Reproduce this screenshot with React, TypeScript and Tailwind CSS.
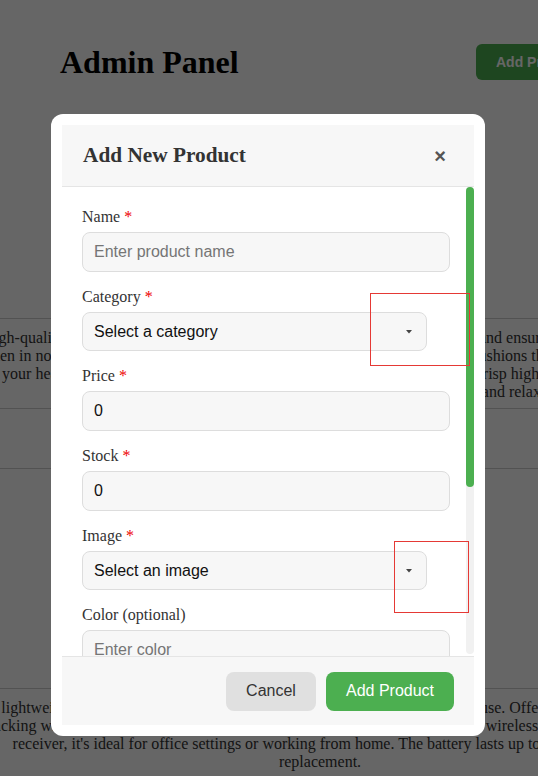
import { ChangeEvent, useState } from 'react'

type Field = {
  name: string
  label: string
  required: boolean
  kind: 'input' | 'select' | 'textarea'
  placeholder?: string
}

const fields: Field[] = [
  { name: 'name', label: 'Name', required: true, kind: 'input', placeholder: 'Enter product name' },
  { name: 'category', label: 'Category', required: true, kind: 'select', placeholder: 'Select a category' },
  { name: 'price', label: 'Price', required: true, kind: 'input' },
  { name: 'stock', label: 'Stock', required: true, kind: 'input' },
  { name: 'image', label: 'Image', required: true, kind: 'select', placeholder: 'Select an image' },
  { name: 'color', label: 'Color (optional)', required: false, kind: 'input', placeholder: 'Enter color' },
  { name: 'description', label: 'Description (optional)', required: false, kind: 'textarea', placeholder: 'Enter description' },
  { name: 'rating', label: 'Rating (optional)', required: false, kind: 'input', placeholder: 'Enter rating' },
]

const initial: Record<string, string> = {
  name: '',
  category: '',
  price: '0',
  stock: '0',
  image: '',
  color: '',
  description: '',
  rating: '',
}

const headphones = [
  'Experience high-quality sound with these wireless headphones, built for all-day comfort and ensuring uninterrupted audio daily.',
  'When you listen in noisy environments, the active noise cancellation and plush soft ear cushions that sit comfortably on the ears',
  'rest gently on your head while the 40mm drivers deliver rich warm mids, deep bass and crisp highs for music, movies and calls.',
  'Up to 30 hours of playback on one charge for travel, work, study and relaxation.',
]

const mouse = [
  'A lightweight ergonomic wireless mouse designed for comfortable everyday use. Offering a smooth and',
  'tracking with adjustable DPI, silent clicks and an easy connection through the wireless nano USB dongle',
  "receiver, it's ideal for office settings or working from home. The battery lasts up to 1 full year of",
  'replacement.',
]

function Caret() {
  return (
    <svg width="6" height="4" viewBox="0 0 6 4" className="pointer-events-none absolute right-[15px] top-1/2 -translate-y-1/2">
      <path d="M0 0h6L3 3.5z" fill="#444" />
    </svg>
  )
}

export default function App() {
  const [form, setForm] = useState(initial)

  const handleChange = (e: ChangeEvent<HTMLInputElement | HTMLSelectElement | HTMLTextAreaElement>) => {
    setForm({ ...form, [e.target.name]: e.target.value })
  }

  return (
    <div className="relative h-[776px] w-full overflow-hidden bg-white font-['Liberation_Serif',serif] text-[#333]">
      {/* page behind the modal */}
      <div className="w-[660px]">
        <div className="flex items-center px-[60px] pt-[44px]">
          <h1 className="text-[32px] leading-[36px] font-bold text-black">Admin Panel</h1>
          <button className="ml-auto h-9 rounded-md bg-[#4caf50] px-5 font-['Liberation_Sans',sans-serif] text-sm font-bold text-white">
            Add Product
          </button>
        </div>

        <div className="mt-[238px] flex w-[640px] flex-col items-center border-y border-[#ccc] pb-[7px] pt-[10px] text-base leading-[18px]">
          {headphones.map((line) => (
            <p key={line} className="whitespace-nowrap">{line}</p>
          ))}
        </div>
        <div className="h-[60px] w-[640px] border-b border-[#ccc]" />

        <div className="mt-[219px] flex w-[640px] flex-col items-center border-t border-[#ccc] pt-[10px] text-base leading-[18px]">
          {mouse.map((line) => (
            <p key={line} className="whitespace-nowrap">{line}</p>
          ))}
        </div>
      </div>

      {/* overlay */}
      <div className="absolute inset-0 bg-black/60 pl-[51px] pt-[114px]">
        <div className="flex h-[622px] w-[434px] flex-col rounded-xl bg-white p-[11px]">
          <div className="flex h-[62px] shrink-0 items-center border-b border-[#e5e5e5] bg-[#f7f7f7] pl-[21px] pr-[28px]">
            <h2 className="text-[21.3px] font-bold text-[#333]">Add New Product</h2>
            <button className="ml-auto font-['Liberation_Sans',sans-serif] text-[20px] font-bold leading-none text-[#555]">×</button>
          </div>

          <div className="flex min-h-0 flex-1">
            <div className="min-w-0 flex-1 overflow-hidden pb-3 pl-5 pr-4 pt-[21px]">
              {fields.map((f) => (
                <div key={f.name} className="mb-4">
                  <label className="mb-1.5 block text-base leading-[18px] text-[#333]">
                    {f.label}
                    {f.required && <span className="text-[#e00]"> *</span>}
                  </label>
                  {f.kind === 'select' ? (
                    <div className="relative w-[345px]">
                      <select
                        name={f.name}
                        value={form[f.name]}
                        onChange={handleChange}
                        className="h-[39px] w-full appearance-none rounded-lg border border-[#ddd] bg-[#f7f7f7] pl-[11px] pr-8 font-['Liberation_Sans',sans-serif] text-base text-[#111] outline-none"
                      >
                        <option value="">{f.placeholder}</option>
                      </select>
                      <Caret />
                    </div>
                  ) : f.kind === 'textarea' ? (
                    <textarea
                      name={f.name}
                      value={form[f.name]}
                      onChange={handleChange}
                      placeholder={f.placeholder}
                      className="block h-[100px] w-full resize-none rounded-lg border border-[#ddd] bg-[#f7f7f7] px-[11px] py-2.5 font-['Liberation_Sans',sans-serif] text-base outline-none placeholder:text-[#757575]"
                    />
                  ) : (
                    <input
                      name={f.name}
                      value={form[f.name]}
                      onChange={handleChange}
                      placeholder={f.placeholder}
                      className="block h-10 w-full rounded-lg border border-[#ddd] bg-[#f7f7f7] px-[11px] font-['Liberation_Sans',sans-serif] text-base text-[#111] outline-none placeholder:text-[#757575]"
                    />
                  )}
                </div>
              ))}
            </div>
            {/* scrollbar */}
            <div className="mb-[2px] w-2 shrink-0 rounded-full bg-[#f1f1f1]">
              <div className="h-[300px] w-2 rounded-full bg-[#4caf50]" />
            </div>
          </div>

          <div className="flex h-[69px] shrink-0 items-center justify-end gap-2.5 border-t border-[#e5e5e5] bg-[#f7f7f7] pr-5 font-['Liberation_Sans',sans-serif] text-base">
            <button className="h-[39px] w-[90px] rounded-lg bg-[#e0e0e0] text-[#333]">Cancel</button>
            <button className="h-[39px] w-[128px] rounded-lg bg-[#4caf50] text-white">Add Product</button>
          </div>
        </div>
      </div>

      {/* annotation boxes */}
      <div className="pointer-events-none absolute left-[370px] top-[293px] h-[73px] w-[100px] border border-[#e53935]" />
      <div className="pointer-events-none absolute left-[394px] top-[541px] h-[72px] w-[75px] border border-[#e53935]" />
    </div>
  )
}
